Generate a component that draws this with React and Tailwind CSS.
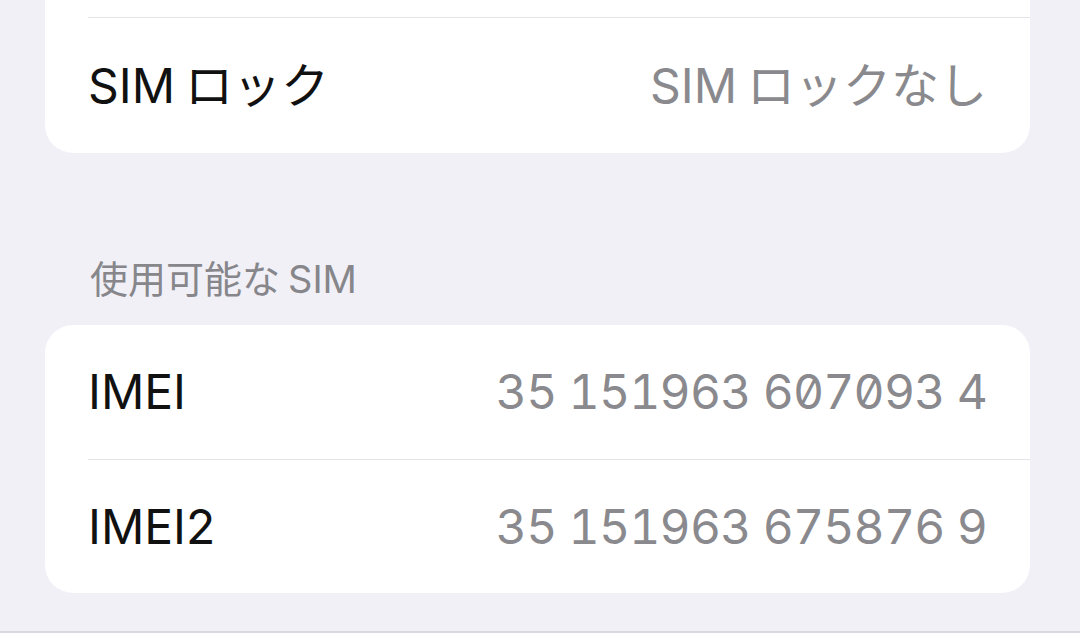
export default function App() {
  const font = { fontFamily: 'Inter, "Noto Sans CJK JP", sans-serif' };
  return (
    <div
      className="w-[1080px] h-[633px] overflow-hidden bg-[#f1f0f7] border-b-2 border-[#d9d9e0] flex flex-col"
      style={font}
    >
      <div className="pl-[45px] pr-[50px]">
        <div className="bg-white rounded-b-[28px]">
          <div className="h-[17px]" />
          <div className="pl-[43px]">
            <div className="border-t border-[#e3e3e8] h-[136px] flex items-center justify-between pr-[43px] text-[48px] leading-none">
              <span className="text-[#111]">
                <span className="mr-[10px]">SIM</span>ロック
              </span>
              <span className="text-[#8a8a8e]">
                <span className="mr-[10px]">SIM</span>ロックなし
              </span>
            </div>
          </div>
        </div>
        <div className="h-[172px] pt-[103px] pl-[45px] text-[38px] leading-[46px] text-[#86868b]">
          使用可能な<span className="ml-[8px]">SIM</span>
        </div>
        <div className="bg-white rounded-[28px] h-[268px] flex flex-col pl-[43px]">
          <div className="h-[134px] flex items-center justify-between pr-[43px] text-[48px] leading-none">
            <span className="text-[#111]">IMEI</span>
            <span className="text-[#8a8a8e] tracking-[-0.8px] [font-feature-settings:'tnum','zero']">35 151963 607093 4</span>
          </div>
          <div className="border-t border-[#e3e3e8] h-[134px] flex items-center justify-between pr-[43px] text-[48px] leading-none">
            <span className="text-[#111]">IMEI2</span>
            <span className="text-[#8a8a8e] tracking-[-0.8px] [font-feature-settings:'tnum','zero']">35 151963 675876 9</span>
          </div>
        </div>
      </div>
    </div>
  );
}
